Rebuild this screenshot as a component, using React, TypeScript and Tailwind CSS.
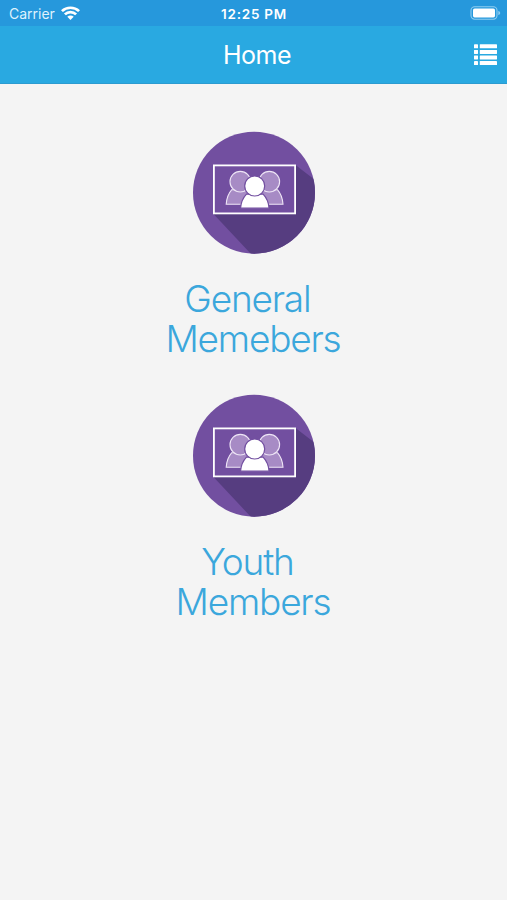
function WifiIcon() {
  return (
    <svg className="ml-[6px] h-[14px] w-[19px]" viewBox="0 0 18 14" preserveAspectRatio="none" fill="none" stroke="white" strokeWidth="2.6">
      <path d="M0.9 5.1a11.6 11.6 0 0 1 16.2 0" />
      <path d="M3.7 8.3a7.5 7.5 0 0 1 10.6 0" />
      <path d="M6 10.8a4.2 4.2 0 0 1 6 0L9 13.9z" fill="white" stroke="none" />
    </svg>
  );
}

function BatteryIcon() {
  return (
    <svg className="h-[14px] w-[31px]" viewBox="0 0 31 14">
      <rect x="1" y="0.8" width="26" height="12.4" rx="3.6" fill="none" stroke="#8fcdf0" strokeWidth="1.1" />
      <rect x="3" y="2.6" width="22" height="8.8" rx="1.6" fill="white" />
      <path d="M28.3 4.9c1.2.4 1.9 1.2 1.9 2.1s-.7 1.7-1.9 2.1z" fill="#8fcdf0" />
    </svg>
  );
}

function MenuIcon() {
  return (
    <svg className="h-[22px] w-[23px]" viewBox="0 0 23 22" fill="white">
      {[0.3, 5.9, 11.5, 17.1].map((y) => (
        <g key={y}>
          <rect x="0" y={y} width="4" height="4" rx="0.4" />
          <rect x="5.8" y={y} width="17.2" height="4" rx="0.4" />
        </g>
      ))}
    </svg>
  );
}

function MembersIcon() {
  return (
    <svg className="h-[122px] w-[122px] overflow-visible" viewBox="0 0 122 122">
      <defs>
        <clipPath id="disc">
          <circle cx="61" cy="60.7" r="61" />
        </clipPath>
      </defs>
      <circle cx="61" cy="60.7" r="61" fill="#724fa0" />
      <path d="M20.5 82L102.5 33L122 48V122H58z" fill="#563d80" clipPath="url(#disc)" />
      <rect x="20.9" y="33.4" width="81.2" height="48" fill="#724fa0" stroke="white" strokeWidth="1.8" />

      {/* People at the back */}
      <g fill="#a78bc5" stroke="#eee5f6" strokeWidth="1.1">
        <path d="M33.2 72.2c.4-5.600 2.200-10.800 5.400-14.400h18.500v14.400z" />
        <path d="M90 72.200c-.4-5.600-2.200-10.800-5.400-14.400H66v14.400z" />
        <circle cx="47.300" cy="49.700" r="10.300" />
        <circle cx="76.300" cy="49.700" r="10.300" />
      </g>

      {/* Person in front */}
      <g fill="white" stroke="#724fa0" strokeWidth="1.200">
        <path d="M47.500 76.200c.5-5.400 2.500-10.400 6-14h16.600c3.500 3.600 5.500 8.600 6 14z" />
        <circle cx="61.700" cy="54" r="10" />
      </g>
    </svg>
  );
}

interface GroupLinkProps {
  lines: string[];
}

function GroupLink({ lines }: GroupLinkProps) {
  return (
    <button className="flex h-[263px] flex-col items-center">
      <MembersIcon />
      <span className="mt-[25px] pr-[2px] text-[37px] leading-[40px] font-light tracking-[-1.2px] whitespace-pre text-[#3ba7dc]">
        {lines.map((line) => (
          <span key={line} className="block first:pr-[2px]">
            {line}
          </span>
        ))}
      </span>
    </button>
  );
}

export default function App() {
  return (
    <div className="flex h-[900px] w-[507px] flex-col bg-[#f4f4f4] font-['Inter','Liberation_Sans',sans-serif]">
      {/* Status bar */}
      <div className="grid h-[26px] grid-cols-[1fr_auto_1fr] items-center bg-[#2698dc] pr-[6px] pl-[7px] text-white">
        <div className="flex items-center pl-[2px]">
          <span className="text-[14px] text-[#dff2fc]">Carrier</span>
          <WifiIcon />
        </div>
        <span className="pt-[2px] text-[13.5px] font-semibold tracking-[0.75px]">12:25 PM</span>
        <div className="flex justify-end">
          <BatteryIcon />
        </div>
      </div>

      {/* Navigation bar */}
      <header className="grid h-[58px] grid-cols-[1fr_auto_1fr] items-center border-b border-[#2c9bd0] bg-[#29a9e1] pr-[10px] pl-[17px] text-white">
        <span />
        <h1 className="pt-[2px] text-[25px] tracking-[-0.5px]">Home</h1>
        <button className="justify-self-end">
          <MenuIcon />
        </button>
      </header>

      <main className="flex flex-col items-center pt-[48px] pl-px">
        <GroupLink lines={['General ', 'Memebers']} />
        <GroupLink lines={['Youth ', 'Members']} />
      </main>
    </div>
  );
}
